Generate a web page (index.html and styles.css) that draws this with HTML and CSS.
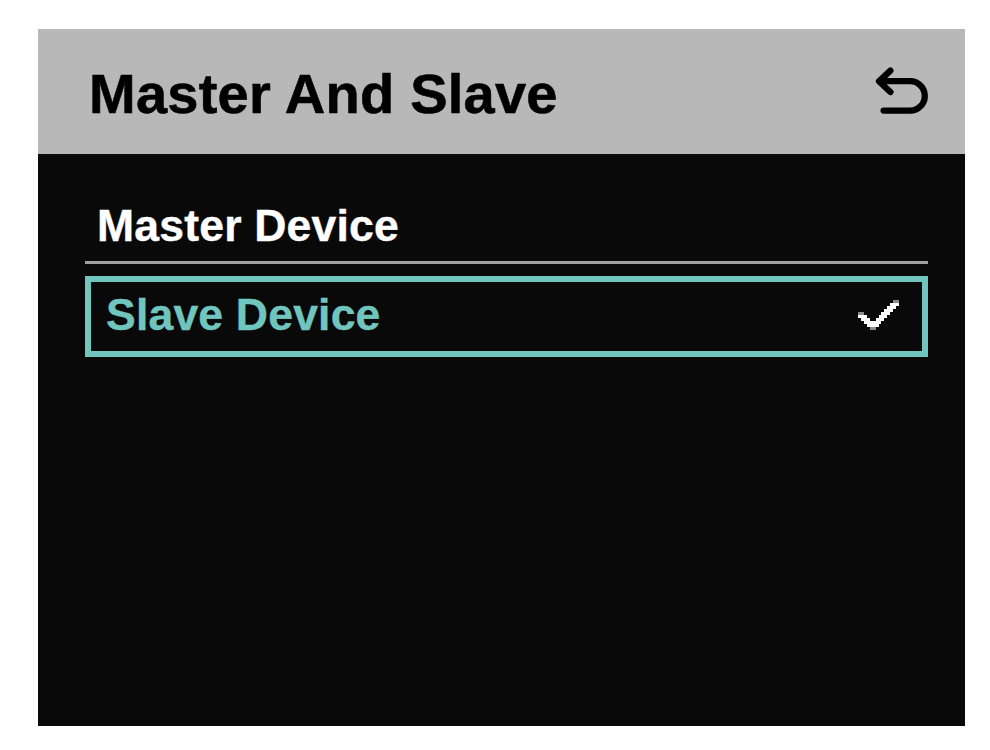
FILE: index.html
```html
<!DOCTYPE html>
<html lang="en">
<head>
  <meta charset="UTF-8">
  <meta name="viewport" content="width=device-width, initial-scale=1.0">
  <title>Master And Slave</title>
  <link rel="stylesheet" href="styles.css">
</head>
<body>
  <div class="screen">
    <header class="header">
      <h1>Master And Slave</h1>
      <button class="back" type="button" aria-label="Back">
        <svg width="56" height="51" viewBox="0 0 56 51" fill="none" stroke="#000" stroke-width="6.3" stroke-linecap="round" stroke-linejoin="round">
          <path d="M17.4 4.6 L6 15.2 L17.4 26" />
          <path d="M7 15.2 H37.1 A14.7 14.7 0 0 1 37.1 44.6 H10.6" />
        </svg>
      </button>
    </header>
    <ul class="menu">
      <li class="item">Master Device</li>
      <li class="item selected">
        Slave Device
        <svg class="check" width="41" height="30" viewBox="0 0 14 10" preserveAspectRatio="none" shape-rendering="crispEdges">
          <path fill="#8c8c8c" d="M12 0h2v2h-1v1h-1v1h-1v1h-1v1h-1v1h-1v1h-1v1h-1v1h-2v-1h-1v-1h-1v-1h-1v-1h-1v-2h2v1h1v1h1v1h2v-1h1v-1h1v-1h1v-1h1v-1h1v-1h1z" />
          <path fill="#fff" d="M11 1h3v1h-1v1h-1v1h-1v1h-1v1h-1v1h-1v1h-1v1h-4v-1h-1v-1h-1v-1h-1v-1h3v1h1v1h2v-1h1v-1h1v-1h1v-1h1v-1h1z" />
        </svg>
      </li>
    </ul>
  </div>
</body>
</html>
```
FILE: styles.css
```css
body {
  margin: 0;
  background-color: #fff;
  font-family: "Liberation Sans", Arial, sans-serif;
}

.screen {
  box-sizing: border-box;
  width: 927px;
  height: 697px;
  margin: 29px 0 0 38px;
  background-color: #090909;
}

.header {
  display: flex;
  justify-content: space-between;
  align-items: flex-start;
  box-sizing: border-box;
  height: 125px;
  padding: 32px 36px 0 51px;
  background-color: #b8b8b8;
}

h1 {
  margin: 0;
  font-size: 56px;
  line-height: 66px;
  letter-spacing: 0.25px;
  color: #000;
  -webkit-text-stroke: 0.6px #000;
}

.back {
  margin-top: 5px;
  padding: 0;
  border: none;
  background: none;
}

.back svg {
  display: block;
}

.menu {
  margin: 0;
  padding: 41px 37px 0 47px;
  list-style: none;
}

.item {
  box-sizing: border-box;
  height: 69px;
  padding: 5px 12px 0;
  border-bottom: 3px solid #a09f9f;
  font-size: 44.5px;
  font-weight: bold;
  line-height: 52px;
  letter-spacing: 0.2px;
  color: #fff;
  -webkit-text-stroke: 0.4px currentColor;
}

.selected {
  display: flex;
  justify-content: space-between;
  height: 81px;
  margin-top: 12px;
  padding: 7px 23px 0 15px;
  border: 6px solid #70c5be;
  color: #70c5be;
}

.check {
  margin-top: 11px;
}
```
